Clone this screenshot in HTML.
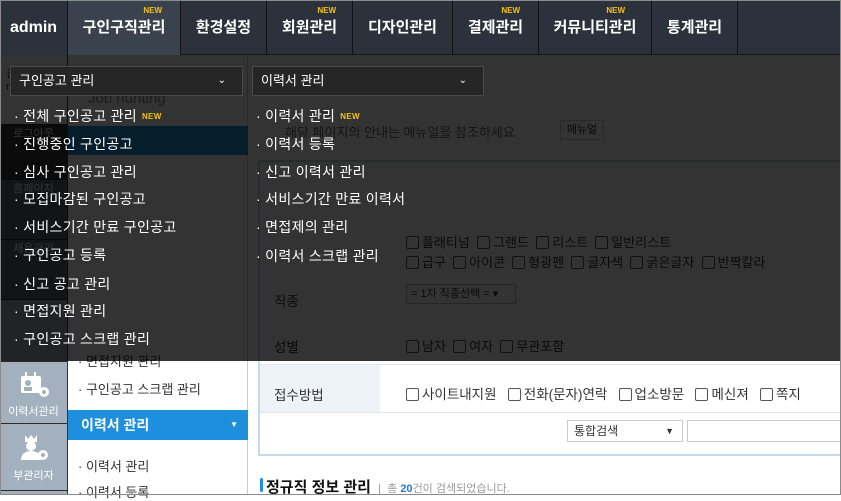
<!DOCTYPE html>
<html><head><meta charset="utf-8"><style>
*{margin:0;padding:0;box-sizing:border-box}
body{width:841px;height:495px;overflow:hidden;position:relative;background:#fff;font-family:"Liberation Sans","Noto Sans CJK KR",sans-serif;font-size:13px;color:#333}
.a{position:absolute}
.frame{position:absolute;left:0;top:0;width:841px;height:495px;border:1px solid #8a8a8a;z-index:50;pointer-events:none}
#nav{left:0;top:0;width:841px;height:55px;background:#2c323b;border-bottom:1px solid #15181c}
.ni{position:absolute;top:0;height:55px;border-right:1px solid #111;color:#fff;font-weight:bold;font-size:15px;text-align:center;line-height:55px}
.new{position:absolute;top:6px;font-size:8px;color:#f4c20d;font-weight:bold;line-height:10px;font-family:"Liberation Sans",sans-serif}
#side{left:0;top:55px;width:68px;height:440px;background:#a3b1be;border-right:1px solid #333}
#sub{left:68px;top:55px;width:180px;height:440px;background:#fff;border-right:1px solid #ccc}
.sb{position:absolute;left:0;width:67px;border-bottom:1px solid #2b2b2b;color:#fff;font-size:11px;text-align:center}
#ov{left:0;top:55px;width:841px;height:306px;background:rgba(0,0,0,0.8);z-index:10}
.dd{position:absolute;z-index:20;height:30px;background:#262626;border:1px solid #4a4a4a;color:#fff;font-size:13px;line-height:28px;padding-left:8px}
.dd span{position:absolute;right:16px;top:0;font-size:10px}
.mi{position:absolute;z-index:20;color:#fff;font-size:14px;font-weight:normal;white-space:nowrap;letter-spacing:.3px}
.mi .new{position:static;display:inline-block;vertical-align:2px;margin-left:5px}
.lt{position:absolute;color:#333;font-size:13px;white-space:nowrap}
.cb{display:inline-block;width:13px;height:13px;border:1px solid #555;border-radius:2px;vertical-align:-2px;margin-right:3px}
</style></head><body>
<div class="frame"></div>
<div class="a" id="nav">
 <div class="ni" style="left:0;width:68px;background:#2c323b;font-size:16px">admin</div>
 <div class="ni" style="left:68px;width:113px;background:#3a424d">구인구직관리<span class="new" style="right:18px">NEW</span></div>
 <div class="ni" style="left:181px;width:86px">환경설정</div>
 <div class="ni" style="left:267px;width:86px">회원관리<span class="new" style="right:16px">NEW</span></div>
 <div class="ni" style="left:353px;width:100px">디자인관리</div>
 <div class="ni" style="left:453px;width:86px">결제관리<span class="new" style="right:18px">NEW</span></div>
 <div class="ni" style="left:539px;width:113px">커뮤니티관리<span class="new" style="right:26px">NEW</span></div>
 <div class="ni" style="left:652px;width:86px">통계관리</div>
</div>
<div class="a" id="side">
 <div class="sb" style="top:0;height:70px;background:#fff;color:#333;text-align:left;padding:10px 0 0 6px">관리자<br>nettp_admin</div>
 <div class="sb" style="top:70px;height:55px;background:#3a3a3a">로그아웃</div>
 <div class="sb" style="top:125px;height:60px;background:#5a6470">홈페이지</div>
 <div class="sb" style="top:185px;height:60px;background:#5a6470">채용관리</div>
 <div class="sb" style="top:245px;height:62px"></div>
 <div class="sb" style="top:307px;height:62px;padding-top:8px">
  <svg width="34" height="30" viewBox="0 0 34 30"><rect x="4" y="6" width="20" height="17" rx="2" fill="#fff"/><rect x="8" y="2" width="2" height="6" fill="#fff"/><rect x="17" y="2" width="2" height="6" fill="#fff"/><circle cx="11" cy="13" r="3" fill="#a3b1be"/><rect x="7" y="17" width="8" height="4" fill="#a3b1be"/><circle cx="27" cy="22" r="5" fill="#fff"/><circle cx="27" cy="22" r="2" fill="#a3b1be"/></svg><br>이력서관리</div>
 <div class="sb" style="top:369px;height:67px;padding-top:8px">
  <svg width="34" height="32" viewBox="0 0 34 32"><path d="M8 3l3 4 3-4 3 4 3-4v7H8z" fill="#fff"/><circle cx="14" cy="14" r="5" fill="#fff"/><path d="M4 28c0-6 4-9 10-9s10 3 10 9z" fill="#fff"/><circle cx="26" cy="23" r="5" fill="#fff"/><circle cx="26" cy="23" r="2" fill="#a3b1be"/></svg><br>부관리자</div>
</div>
<div class="a" id="sub">
 <div class="lt" style="left:20px;top:35px;font-size:15px;color:#888">Job hunting</div>
 <div class="a" style="left:0;top:71px;width:180px;height:29px;background:#1e8fdd"></div>
 <div class="lt" style="left:10px;top:296px">· 면접지원 관리</div>
 <div class="lt" style="left:10px;top:324px">· 구인공고 스크랩 관리</div>
 <div class="a" style="left:0;top:355px;width:180px;height:30px;background:#1e8fdd;color:#fff;font-weight:bold;font-size:14px;line-height:30px;padding-left:13px">이력서 관리<span style="position:absolute;right:10px;font-size:8px">▼</span></div>
 <div class="lt" style="left:10px;top:401px">· 이력서 관리</div>
 <div class="lt" style="left:10px;top:427px">· 이력서 등록</div>
</div>
<!-- main -->
<div class="a" style="left:258px;top:160px;width:590px;height:296px;border:2px solid #c5d9ee;background:#fff">
 <div class="a" style="left:0;top:202px;width:120px;height:48px;background:#eef3f9"></div>
 <div class="a" style="left:0;top:202px;width:590px;border-top:1px solid #e4e4e4"></div>
 <div class="a" style="left:0;top:250px;width:590px;border-top:1px solid #e4e4e4"></div>
 <div class="lt" style="left:14px;top:222px;font-size:13.5px">접수방법</div>
 <div class="lt" style="left:146px;top:221px;font-size:13.5px"><span class="cb"></span>사이트내지원 &nbsp;&nbsp;<span class="cb"></span>전화(문자)연락 &nbsp;&nbsp;<span class="cb"></span>업소방문 &nbsp;&nbsp;<span class="cb"></span>메신져 &nbsp;&nbsp;<span class="cb"></span>쪽지</div>
 <div class="lt" style="left:14px;top:174px;font-size:13.5px">성별</div>
 <div class="lt" style="left:146px;top:174px"><span class="cb"></span>남자 &nbsp;<span class="cb"></span>여자 &nbsp;<span class="cb"></span>무관포함</div>
 <div class="lt" style="left:14px;top:128px;font-size:13.5px">직종</div>
 <div class="a" style="left:146px;top:122px;width:110px;height:20px;border:1px solid #bbb;font-size:11px;padding-left:4px;line-height:18px">= 1차 직종선택 = ▾</div>
 <div class="lt" style="left:146px;top:70px"><span class="cb"></span>플래티넘 &nbsp;<span class="cb"></span>그랜드 &nbsp;<span class="cb"></span>리스트 &nbsp;<span class="cb"></span>일반리스트</div>
 <div class="lt" style="left:146px;top:90px"><span class="cb"></span>급구 &nbsp;<span class="cb"></span>아이콘 &nbsp;<span class="cb"></span>형광펜 &nbsp;<span class="cb"></span>글자색 &nbsp;<span class="cb"></span>굵은글자 &nbsp;<span class="cb"></span>반짝칼라</div>
 <div class="a" style="left:307px;top:258px;width:116px;height:22px;border:1px solid #ccc;font-size:12px;line-height:20px;padding-left:6px">통합검색<span style="position:absolute;right:8px;font-size:9px">▼</span></div>
 <div class="a" style="left:427px;top:258px;width:170px;height:22px;border:1px solid #ccc"></div>
</div>
<div class="a" style="left:260px;top:478px;width:3px;height:14px;background:#1e8fdd;border-radius:2px"></div>
<div class="lt" style="left:266px;top:476px;font-size:15px;font-weight:bold;color:#111">정규직 정보 관리 <span style="font-size:11px;font-weight:normal;color:#999">&nbsp;|&nbsp; 총 <b style="color:#1e7fd0">20</b>건이 검색되었습니다.</span></div>
<div class="lt" style="left:285px;top:122px;color:#666">해당 페이지의 안내는 메뉴얼을 참조하세요</div>
<div class="a" style="left:560px;top:120px;width:44px;height:20px;border:1px solid #ccc;font-size:11px;text-align:center;line-height:18px">메뉴얼</div>

<div class="a" id="ov"></div>
<div class="dd" style="left:10px;top:66px;width:233px">구인공고 관리<span>⌄</span></div>
<div class="dd" style="left:252px;top:66px;width:232px">이력서 관리<span>⌄</span></div>
<div class="mi" style="left:14px;top:106px">· 전체 구인공고 관리<span class="new">NEW</span></div>
<div class="mi" style="left:14px;top:134px">· 진행중인 구인공고</div>
<div class="mi" style="left:14px;top:162px">· 심사 구인공고 관리</div>
<div class="mi" style="left:14px;top:189px">· 모집마감된 구인공고</div>
<div class="mi" style="left:14px;top:217px">· 서비스기간 만료 구인공고</div>
<div class="mi" style="left:14px;top:245px">· 구인공고 등록</div>
<div class="mi" style="left:14px;top:274px">· 신고 공고 관리</div>
<div class="mi" style="left:14px;top:301px">· 면접지원 관리</div>
<div class="mi" style="left:14px;top:329px">· 구인공고 스크랩 관리</div>
<div class="mi" style="left:256px;top:106px">· 이력서 관리<span class="new">NEW</span></div>
<div class="mi" style="left:256px;top:134px">· 이력서 등록</div>
<div class="mi" style="left:256px;top:162px">· 신고 이력서 관리</div>
<div class="mi" style="left:256px;top:189px">· 서비스기간 만료 이력서</div>
<div class="mi" style="left:256px;top:217px">· 면접제의 관리</div>
<div class="mi" style="left:256px;top:246px">· 이력서 스크랩 관리</div>
</body></html>
